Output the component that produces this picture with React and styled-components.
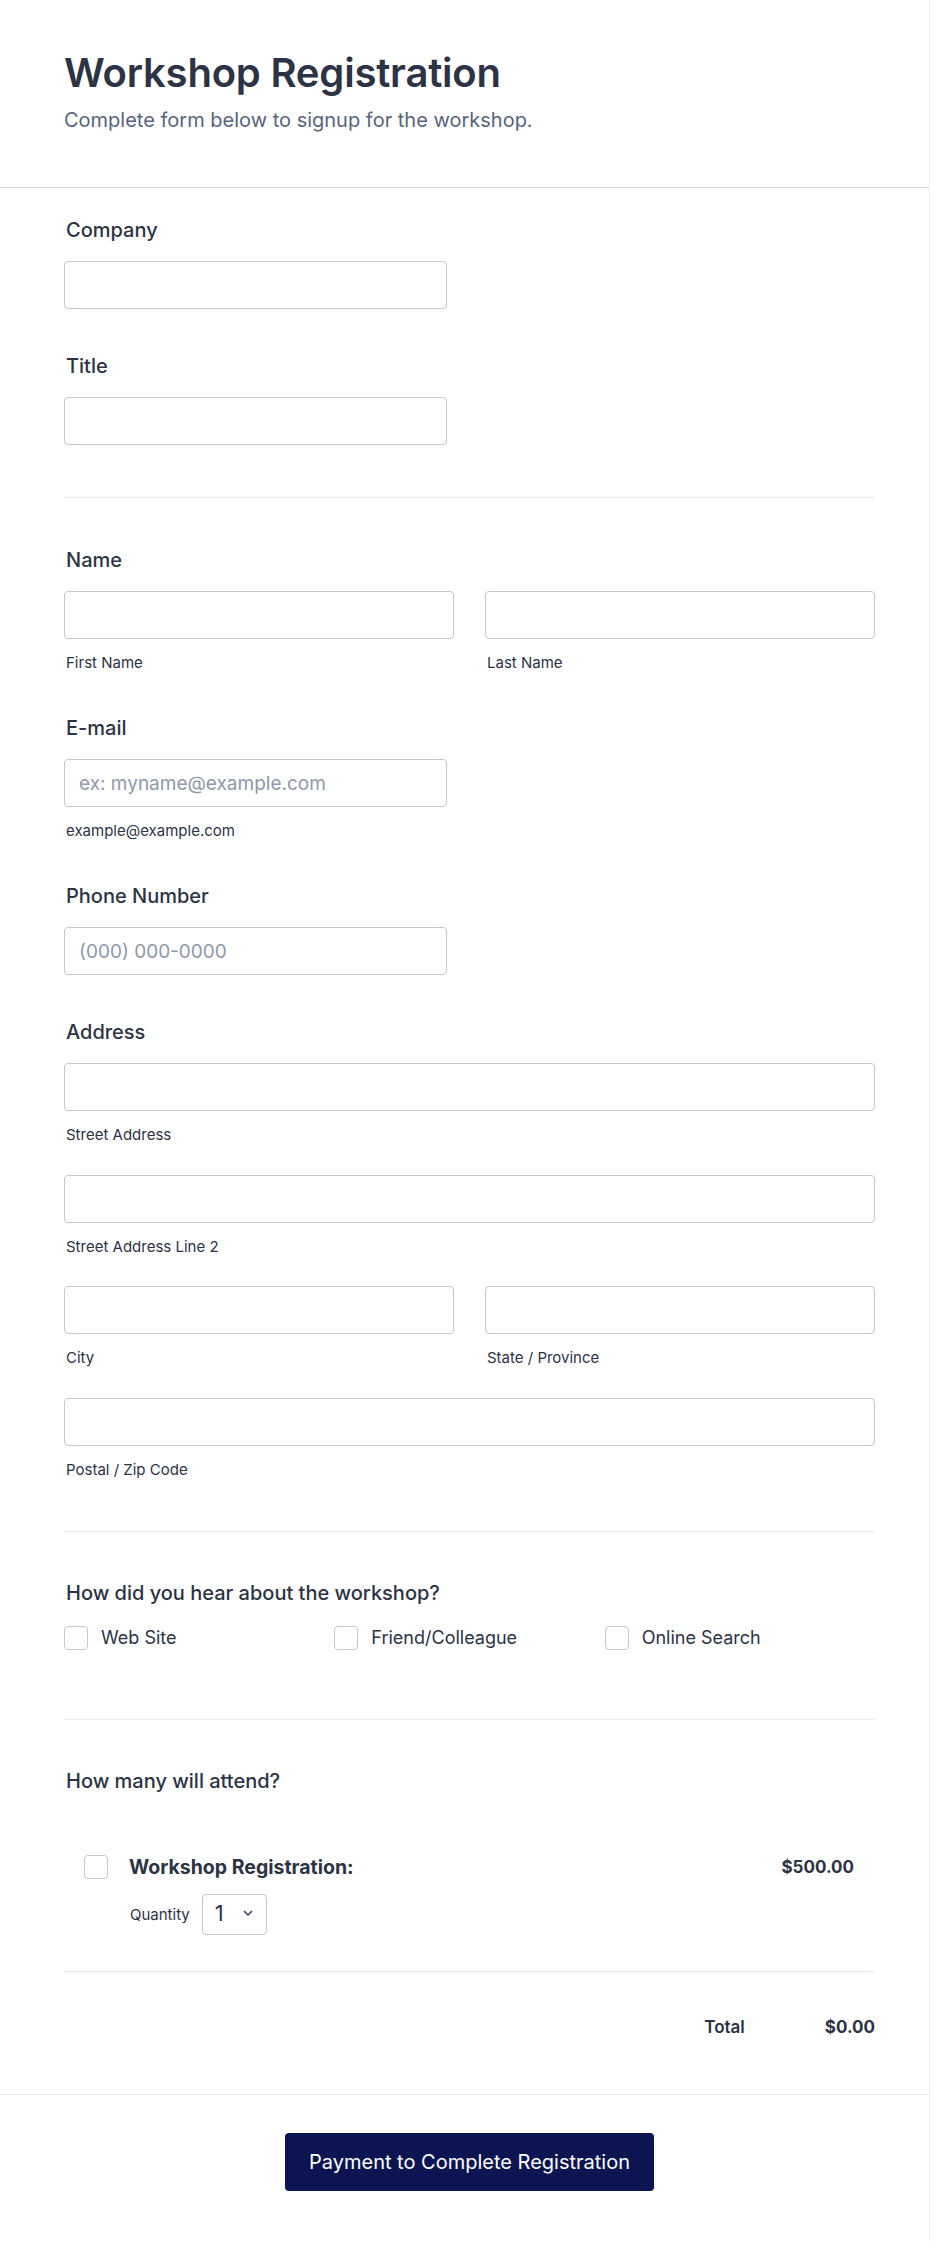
import React from 'react'
import styled, { createGlobalStyle } from 'styled-components'

const GlobalStyle = createGlobalStyle`
  html, body {
    margin: 0;
    padding: 0;
    background: #fff;
  }
  body {
    font-family: Inter, "Noto Sans", sans-serif;
    color: #2c3345;
  }
  * { box-sizing: border-box; }
`;

const Card = styled.div`
    width: 930px;
    min-height: 2241px;
    background: #fff;
    border-right: 1px solid #eceef4;
    border-bottom: 1px solid #eceef4;
`;

const Header = styled.header`
    padding: 49px 64px 53px;
    border-bottom: 1px solid #dcdde8;
`;

const Heading = styled.h1`
    margin: 0;
    font-size: 40px;
    line-height: 48px;
    font-weight: 600;
    color: #2c3345;
    letter-spacing: -0.2px;
`;

const SubHeading = styled.p`
    margin: 9px 0 0;
    font-size: 20px;
    line-height: 28px;
    color: #57647e;
`;

const Body = styled.div`
    width: 811px;
    margin-left: 64px;
    padding-top: 28px;
`;

const Field = styled.div`
    margin-bottom: ${p => p.$gap || 41}px;
`;

const Label = styled.label`
    display: block;
    padding-left: 2px;
    font-size: 20px;
    line-height: 28px;
    font-weight: 500;
    color: #2c3345;
    margin-bottom: ${p => p.$gap ?? 17}px;
`;

const Row = styled.div`
    display: grid;
    grid-template-columns: ${p => p.$cols === 2 ? '1fr 1fr' : '1fr'};
    column-gap: 31px;
    & + & {
        margin-top: 29.5px;
    }
`;

const Input = styled.input`
    display: block;
    width: ${p => p.$short ? '383px' : '100%'};
    height: 48px;
    padding: 0 14px;
    border: 1px solid #c3c7d3;
    border-radius: 4px;
    background: #fff;
    font-family: Inter, sans-serif;
    font-size: 19px;
    color: #2c3345;
    outline: none;
    &::placeholder {
        color: #8f98aa;
    }
`;

const SubLabel = styled.span`
    display: block;
    margin-top: 13px;
    padding-left: 2px;
    font-size: 15px;
    line-height: 21px;
    color: #2c3345;
`;

const Divider = styled.hr`
    margin: 0 0 ${p => p.$after || 48}px;
    border: 0;
    border-top: 1px solid #ebecf2;
`;

const OptionGrid = styled.div`
    display: grid;
    grid-template-columns: repeat(3, 1fr);
`;

const Option = styled.label`
    display: flex;
    align-items: center;
    gap: 13px;
    height: 24px;
    font-size: 18px;
    color: #2c3345;
`;

const Check = styled.input.attrs({ type: 'checkbox' })`
    appearance: none;
    margin: 0;
    width: 24px;
    height: 24px;
    flex: none;
    border: 1px solid #c3c7d3;
    border-radius: 4px;
    background: #fff;
`;

const Product = styled.div`
    padding: 0 21px 0 20px;
    margin-top: 60px;
`;

const ProductTop = styled.div`
    display: flex;
    align-items: center;
    gap: 21px;
    height: 24px;
`;

const ProductName = styled.span`
    flex: 1;
    font-size: 19.5px;
    font-weight: 700;
    color: #2c3345;
`;

const Price = styled.span`
    font-size: 17px;
    font-weight: 700;
    color: #2c3345;
`;

const QtyRow = styled.div`
    display: flex;
    align-items: center;
    gap: 12px;
    margin: 15px 0 0 46px;
`;

const QtyLabel = styled.span`
    font-size: 15px;
    color: #2c3345;
`;

const SelectBox = styled.div`
    display: flex;
    align-items: center;
    justify-content: space-between;
    width: 65px;
    height: 41px;
    padding: 0 13px 2px 12px;
    border: 1px solid #c3c7d3;
    border-radius: 4px;
    font-size: 22px;
    color: #2c3345;
`;

const TotalLine = styled.div`
    margin-top: 36px;
    border-top: 1px solid #e3e5ee;
    display: flex;
    justify-content: flex-end;
    align-items: baseline;
    gap: 80px;
    padding-top: 45px;
    height: 123px;
`;

const TotalLabel = styled.span`
    font-size: 17px;
    font-weight: 600;
`;

const TotalValue = styled.span`
    font-size: 17px;
    font-weight: 700;
`;

const Footer = styled.div`
    border-top: 1px solid #e7e8ee;
    padding: 38px 0 50px;
`;

const FooterInner = styled.div`
    width: 811px;
    margin-left: 64px;
    display: flex;
    justify-content: center;
`;

const SubmitButton = styled.button`
    width: 369px;
    height: 58px;
    border: 0;
    border-radius: 4px;
    background: #0c1552;
    color: #fff;
    font-family: Inter, sans-serif;
    font-size: 20px;
    font-weight: 400;
`;

const Chevron = () => (
    <svg width="10" height="7" viewBox="0 0 10 7" fill="none">
        <path d="M1.5 1.5L5 5L8.5 1.5" stroke="#57647e" strokeWidth="1.8" strokeLinecap="round" strokeLinejoin="round" />
    </svg>
)

function App() {
    return (
        <Card>
            <GlobalStyle />
            <Header>
                <Heading>Workshop Registration</Heading>
                <SubHeading>Complete form below to signup for the workshop.</SubHeading>
            </Header>

            <Body>
                <Field $gap={43}>
                    <Label>Company</Label>
                    <Input $short />
                </Field>
                <Field $gap={52}>
                    <Label>Title</Label>
                    <Input $short />
                </Field>

                <Divider />

                <Field>
                    <Label>Name</Label>
                    <Row $cols={2}>
                        <div>
                            <Input />
                            <SubLabel>First Name</SubLabel>
                        </div>
                        <div>
                            <Input />
                            <SubLabel>Last Name</SubLabel>
                        </div>
                    </Row>
                </Field>

                <Field>
                    <Label>E-mail</Label>
                    <Input $short placeholder="ex: myname@example.com" />
                    <SubLabel>example@example.com</SubLabel>
                </Field>

                <Field $gap={43}>
                    <Label>Phone Number</Label>
                    <Input $short placeholder="(000) 000-0000" />
                </Field>

                <Field $gap={51}>
                    <Label>Address</Label>
                    <Row>
                        <div>
                            <Input />
                            <SubLabel>Street Address</SubLabel>
                        </div>
                    </Row>
                    <Row>
                        <div>
                            <Input />
                            <SubLabel>Street Address Line 2</SubLabel>
                        </div>
                    </Row>
                    <Row $cols={2}>
                        <div>
                            <Input />
                            <SubLabel>City</SubLabel>
                        </div>
                        <div>
                            <Input />
                            <SubLabel>State / Province</SubLabel>
                        </div>
                    </Row>
                    <Row>
                        <div>
                            <Input />
                            <SubLabel>Postal / Zip Code</SubLabel>
                        </div>
                    </Row>
                </Field>

                <Divider $after={47} />

                <Field $gap={69}>
                    <Label $gap={19}>How did you hear about the workshop?</Label>
                    <OptionGrid>
                        <Option><Check />Web Site</Option>
                        <Option><Check />Friend/Colleague</Option>
                        <Option><Check />Online Search</Option>
                    </OptionGrid>
                </Field>

                <Divider $after={47} />

                <Label $gap={0}>How many will attend?</Label>
                <Product>
                    <ProductTop>
                        <Check />
                        <ProductName>Workshop Registration:</ProductName>
                        <Price>$500.00</Price>
                    </ProductTop>
                    <QtyRow>
                        <QtyLabel>Quantity</QtyLabel>
                        <SelectBox>
                            <span>1</span>
                            <Chevron />
                        </SelectBox>
                    </QtyRow>
                </Product>

                <TotalLine>
                    <TotalLabel>Total</TotalLabel>
                    <TotalValue>$0.00</TotalValue>
                </TotalLine>
            </Body>

            <Footer>
                <FooterInner>
                    <SubmitButton>Payment to Complete Registration</SubmitButton>
                </FooterInner>
            </Footer>
        </Card>
    )
}

export default App
